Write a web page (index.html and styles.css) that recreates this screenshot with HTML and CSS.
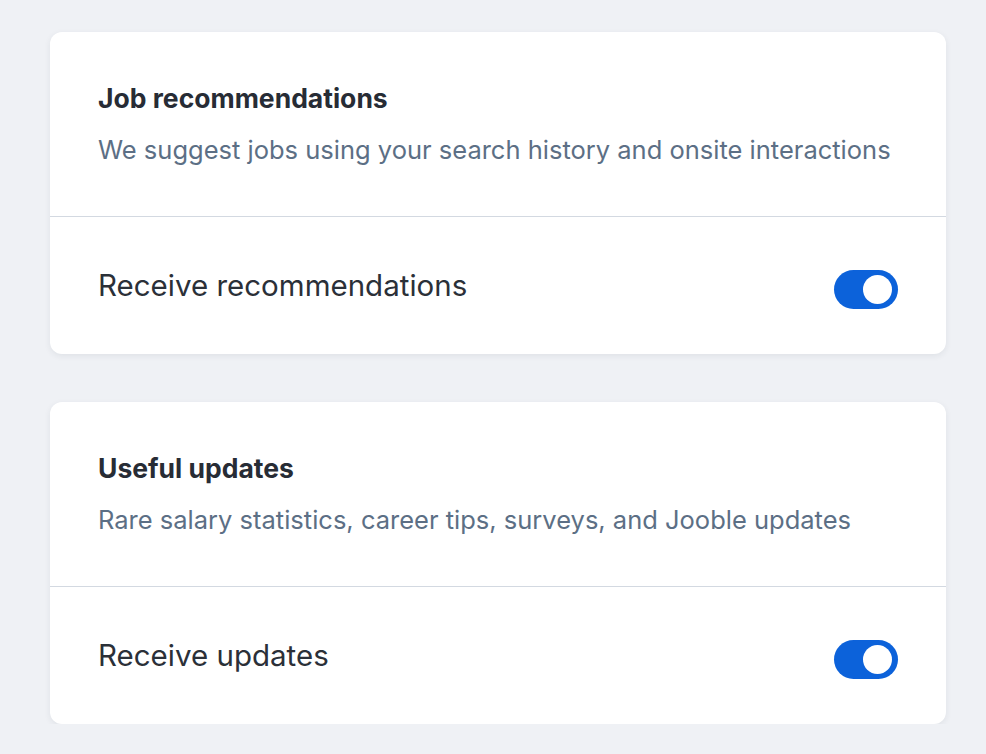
FILE: index.html
```html
<!DOCTYPE html>
<html lang="en">
<head>
<meta charset="utf-8">
<title>Settings</title>
<link rel="stylesheet" href="styles.css">
</head>
<body>
<main class="page">
  <section class="card">
    <div class="card-head">
      <h2 class="card-title">Job recommendations</h2>
      <p class="card-desc">We suggest jobs using your search history and onsite interactions</p>
    </div>
    <div class="card-row">
      <span class="row-label">Receive recommendations</span>
      <span class="toggle is-on"><span class="toggle-thumb"></span></span>
    </div>
  </section>
  <section class="card">
    <div class="card-head">
      <h2 class="card-title">Useful updates</h2>
      <p class="card-desc">Rare salary statistics, career tips, surveys, and Jooble updates</p>
    </div>
    <div class="card-row">
      <span class="row-label">Receive updates</span>
      <span class="toggle is-on"><span class="toggle-thumb"></span></span>
    </div>
  </section>
</main>
</body>
</html>
```
FILE: styles.css
```css
html, body {
  margin: 0;
  padding: 0;
  background: #eff1f5;
}
body {
  font-family: Inter, "Noto Sans", sans-serif;
  color: #2a2f37;
}
.page {
  display: flex;
  flex-direction: column;
  gap: 48px;
  padding: 32px 40px 0 50px;
}
.card {
  background: #fff;
  border-radius: 12px;
  box-shadow: 0 2px 6px rgba(40, 50, 70, 0.08);
}
.card-head {
  padding: 48px 48px 48px;
  border-bottom: 1px solid #d3d9e1;
}
.card-title {
  margin: 0 0 16px;
  font-size: 26.5px;
  line-height: 36px;
  font-weight: 700;
  color: #272c35;
}
.card-desc {
  margin: 0;
  font-size: 25.5px;
  line-height: 36px;
  color: #5c6f85;
}
.card-row {
  display: flex;
  align-items: center;
  justify-content: space-between;
  height: 137px;
  padding: 0 48px;
  box-sizing: border-box;
}
.row-label {
  font-size: 29.5px;
  line-height: 40px;
  margin-bottom: 2px;
  color: #2b3038;
}
.toggle {
  position: relative;
  width: 64px;
  height: 39px;
  margin-top: 8px;
  border-radius: 20px;
  background: #0c62da;
}
.toggle-thumb {
  position: absolute;
  top: 5px;
  right: 6px;
  width: 29px;
  height: 29px;
  border-radius: 50%;
  background: #fff;
}
```
